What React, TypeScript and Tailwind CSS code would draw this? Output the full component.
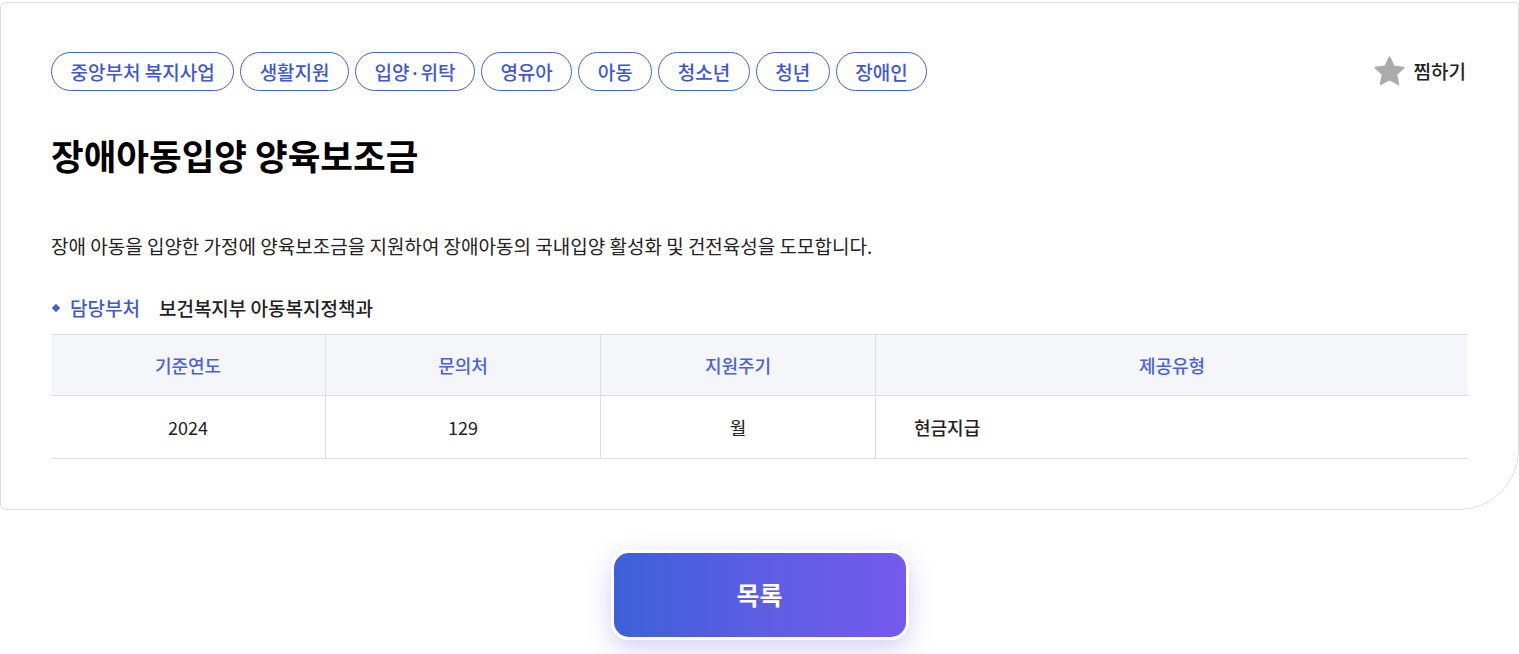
import React from "react";

const tags = ["중앙부처 복지사업", "생활지원", "입양·위탁", "영유아", "아동", "청소년", "청년", "장애인"];

export default function App() {
  const font = { fontFamily: '"Noto Sans CJK KR", "Noto Sans", sans-serif' };
  return (
    <div className="w-full bg-white pt-[2px]" style={font}>
      <div className="border border-[#dedede] rounded-tl-[6px] rounded-bl-[6px] rounded-tr-[4px] rounded-br-[60px] pt-[49px] px-[50px] pb-[50px]">
        <div className="flex items-center justify-between">
          <div className="flex gap-[6px]">
            {tags.map((t) => (
              <span
                key={t}
                className="h-[39px] px-[18.5px] flex items-center rounded-full border border-[#4361d6] text-[#3f58cf] text-[19px] font-medium leading-none"
              >
                {t}
              </span>
            ))}
          </div>
          <button className="flex items-center gap-[7px] mr-[2px]">
            <svg width="35" height="35" viewBox="0 0 24 24">
              <path
                d="M12 2.2l2.95 6.3 6.85.8-5.1 4.7 1.4 6.8L12 17.4l-6.1 3.4 1.4-6.8-5.1-4.7 6.85-.8z"
                fill="#ababab"
                stroke="#ababab"
                strokeWidth="1.2"
                strokeLinejoin="round"
              />
            </svg>
            <span className="text-[19px] font-medium text-[#222]">찜하기</span>
          </button>
        </div>
        <h1 className="mt-[42px] text-[35.5px] leading-[44px] font-bold text-black">
          장애아동입양 양육보조금
        </h1>
        <p className="mt-[56px] text-[19px] leading-[26px] text-[#222]">
          장애 아동을 입양한 가정에 양육보조금을 지원하여 장애아동의 국내입양 활성화 및 건전육성을 도모합니다.
        </p>
        <div className="mt-[36px] flex items-center h-[26px]">
          <span className="w-[6px] h-[6px] bg-[#4361d6] rotate-45 ml-[2px] mr-[11px]" />
          <span className="text-[19px] font-medium text-[#3f58cf]">담당부처</span>
          <span className="ml-[19px] text-[19px] font-medium text-[#222]">보건복지부 아동복지정책과</span>
        </div>
        <div className="mt-[13px] border-t border-[#dedede]">
          <div className="grid grid-cols-[275px_275px_275px_1fr] bg-[#f5f6fa] border-b border-[#dedede] h-[61px]">
            {["기준연도", "문의처", "지원주기", "제공유형"].map((h, i) => (
              <div
                key={h}
                className={`flex items-center justify-center text-[18px] font-medium text-[#4b62dd] ${i < 3 ? "border-r border-[#dedede]" : ""}`}
              >
                {h}
              </div>
            ))}
          </div>
          <div className="grid grid-cols-[275px_275px_275px_1fr] border-b border-[#dedede] h-[63px]">
            <div className="flex items-center justify-center border-r border-[#dedede] text-[18px] text-[#222]">2024</div>
            <div className="flex items-center justify-center border-r border-[#dedede] text-[18px] text-[#222]">129</div>
            <div className="flex items-center justify-center border-r border-[#dedede] text-[18px] text-[#222]">월</div>
            <div className="flex items-center pl-[38px] text-[18px] font-medium text-[#222]">현금지급</div>
          </div>
        </div>
      </div>
      <div className="flex justify-center mt-[40px] pb-[14px]">
        <button className="w-[298px] h-[90px] rounded-[18px] border-[3px] border-white bg-gradient-to-r from-[#3c60d8] to-[#755aee] text-white text-[25px] font-bold shadow-[0_8px_24px_rgba(110,100,220,0.3)]">
          목록
        </button>
      </div>
    </div>
  );
}
